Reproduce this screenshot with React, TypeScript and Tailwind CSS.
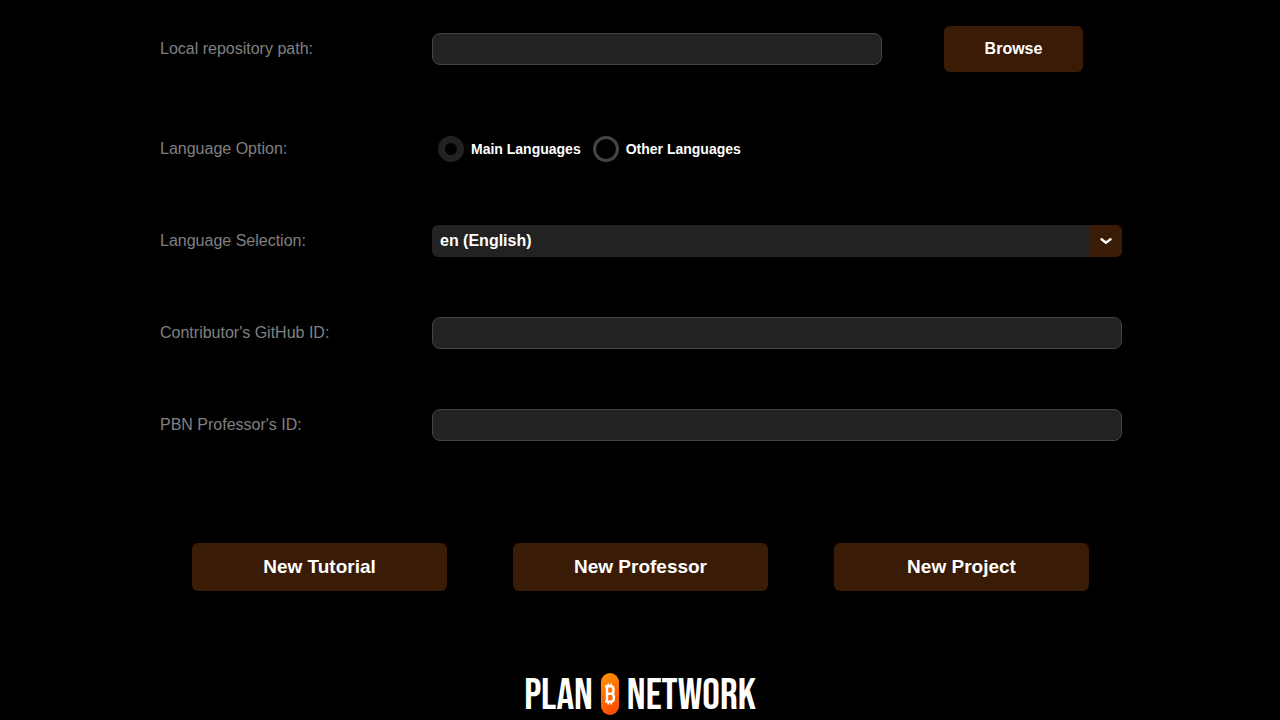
import { useState } from "react";
import type { ReactNode } from "react";

const BUTTON =
  "cursor-pointer rounded-md bg-[#3a1b06] font-bold text-white hover:bg-[#4c2509]";
const FIELD =
  "w-full rounded-lg border border-[#444444] bg-[#222222] px-2 text-[16px] font-bold text-white outline-none focus:border-[#777777]";

function Row({
  label,
  htmlFor,
  children,
}: {
  label: string;
  htmlFor: string;
  children: ReactNode;
}) {
  return (
    <div className="grid grid-cols-[272px_1fr] items-center">
      <label htmlFor={htmlFor} className="text-[16px] leading-6 text-[#808080]">
        {label}
      </label>
      {children}
    </div>
  );
}

function LanguageOption({
  id,
  label,
  checked,
  onSelect,
}: {
  id: string;
  label: string;
  checked: boolean;
  onSelect: () => void;
}) {
  return (
    <div className="flex items-center gap-[7px]">
      <input
        id={id}
        type="radio"
        name="language-option"
        checked={checked}
        onChange={onSelect}
        className="size-[26px] appearance-none rounded-full border-[3px] border-[#444444] checked:border-[7px] checked:border-[#222222]"
      />
      <label htmlFor={id} className="text-[14px] leading-5 font-bold text-white">
        {label}
      </label>
    </div>
  );
}

function Logo() {
  return (
    <div className="flex items-start justify-center gap-2 font-['Bebas_Neue','Oswald','Noto_Sans_ExtraCondensed','Roboto_Condensed','Open_Sans_Condensed','Liberation_Sans_Narrow',sans-serif] text-[44px] leading-[46px] text-white">
      <span>PLAN</span>
      <svg viewBox="0 0 18 42" className="h-[42px] w-[18px]" aria-hidden="true">
        <defs>
          <linearGradient id="pill" x1="0" y1="0" x2="0.3" y2="1">
            <stop offset="0" stopColor="#ff9500" />
            <stop offset="1" stopColor="#ff5000" />
          </linearGradient>
        </defs>
        <rect width="18" height="42" rx="9" fill="url(#pill)" />
        <g fill="none" stroke="#fff" strokeWidth="2.4">
          <path d="M4.2 13.2h5.6q2.6 0 2.6 2.6v2.4q0 2.6-2.6 2.6H6.5M9.8 20.8q3 0 3 2.6v2.4q0 2.8-3 2.8H4.2M6 13v15.5" />
          <path d="M7.2 10.5v3M10.2 10.5v3M7.2 28.4v3M10.2 28.4v3" strokeWidth="1.6" />
        </g>
      </svg>
      <span>NETWORK</span>
    </div>
  );
}

export default function App() {
  const [option, setOption] = useState("main");

  return (
    <main className="min-h-screen bg-black pt-[26px] font-['Liberation_Sans',Arial,sans-serif]">
      <form onSubmit={(e) => e.preventDefault()}>
        <div className="flex flex-col gap-[60px] pr-[158px] pl-[160px]">
          <Row label="Local repository path:" htmlFor="repo-path">
            <div className="flex items-center gap-[62px] pr-[39px]">
              <input id="repo-path" type="text" className={`${FIELD} h-8 min-w-0 flex-1`} />
              <button type="button" className={`${BUTTON} h-[46px] w-[139px] text-[16px]`}>
                Browse
              </button>
            </div>
          </Row>

          <Row label="Language Option:" htmlFor="main-languages">
            <div className="flex h-[33px] items-center gap-3 pl-[6px]">
              <LanguageOption
                id="main-languages"
                label="Main Languages"
                checked={option === "main"}
                onSelect={() => setOption("main")}
              />
              <LanguageOption
                id="other-languages"
                label="Other Languages"
                checked={option === "other"}
                onSelect={() => setOption("other")}
              />
            </div>
          </Row>

          <Row label="Language Selection:" htmlFor="language">
            <div className="relative h-8 overflow-hidden rounded-md">
              <select
                id="language"
                className="h-8 w-full appearance-none bg-[#222222] pr-10 pl-2 text-[16px] font-bold text-white outline-none"
              >
                <option>en (English)</option>
              </select>
              <span className="pointer-events-none absolute inset-y-0 right-0 flex w-8 items-center justify-center bg-[#3a1b06]">
                <svg viewBox="0 0 12 8" className="h-2 w-3" aria-hidden="true">
                  <path
                    d="M1.5 2.3L6 5.7L10.5 2.3"
                    fill="none"
                    stroke="#fff"
                    strokeWidth="2.4"
                    strokeLinecap="round"
                    strokeLinejoin="round"
                  />
                </svg>
              </span>
            </div>
          </Row>

          <Row label="Contributor's GitHub ID:" htmlFor="github-id">
            <input id="github-id" type="text" className={`${FIELD} h-8`} />
          </Row>

          <Row label="PBN Professor's ID:" htmlFor="professor-id">
            <input id="professor-id" type="text" className={`${FIELD} h-8`} />
          </Row>
        </div>

        <div className="mt-[102px] grid grid-cols-3 gap-[66px] pr-[191px] pl-[192px]">
          <button type="button" className={`${BUTTON} h-12 text-[19px]`}>
            New Tutorial
          </button>
          <button type="button" className={`${BUTTON} h-12 text-[19px]`}>
            New Professor
          </button>
          <button type="button" className={`${BUTTON} h-12 text-[19px]`}>
            New Project
          </button>
        </div>
      </form>

      <footer className="mt-[82px]">
        <Logo />
      </footer>
    </main>
  );
}
